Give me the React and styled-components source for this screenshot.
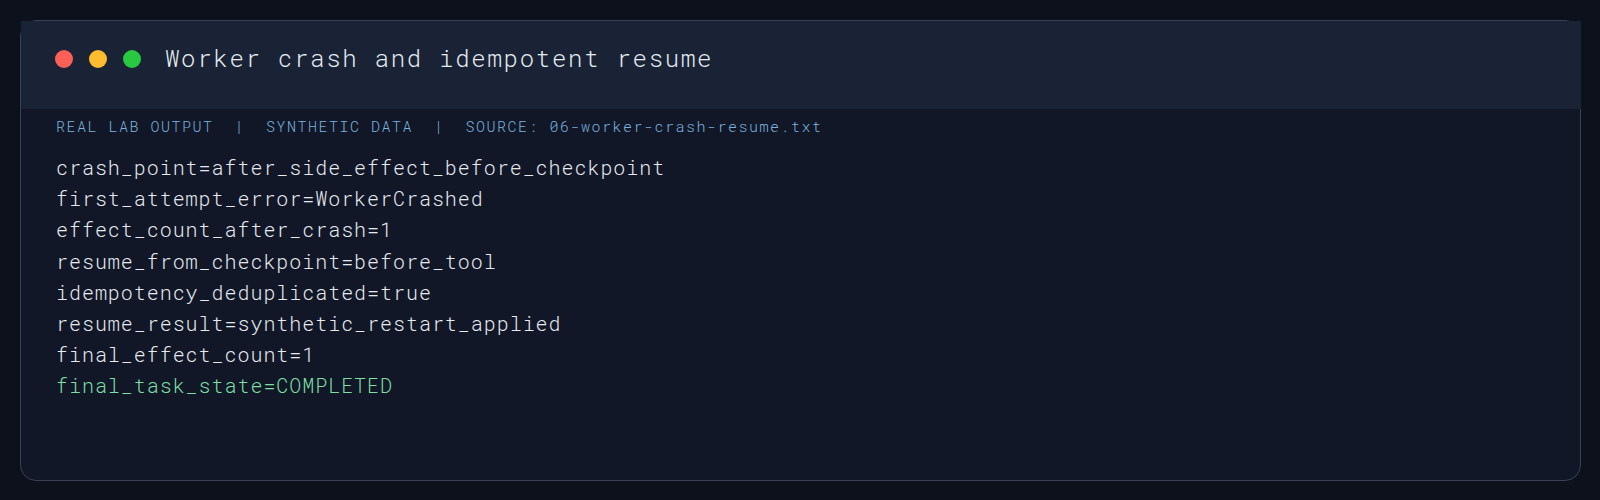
import React from 'react';
import styled, { createGlobalStyle } from 'styled-components';

const GlobalStyle = createGlobalStyle`
  html, body {
    margin: 0;
    padding: 0;
    background: #0c111b;
  }
  body {
    font-family: "Roboto Mono", "DejaVu Sans Mono", monospace;
  }
`;

const Page = styled.div`
  padding: 20px 19px 20px 20px;
  background: #0c111b;
  min-height: 500px;
  box-sizing: border-box;
`;

const Card = styled.div`
  height: 461px;
  box-sizing: border-box;
  border: 1px solid #364254;
  border-radius: 16px;
  background: #111727;
  display: flex;
  flex-direction: column;
`;

const Header = styled.div`
  display: flex;
  align-items: center;
  gap: 16px;
  height: 88px;
  box-sizing: border-box;
  padding: 22px 34px 35px;
  background: #1a2335;
  margin: 0 -1px 0 0;
`;

const Dots = styled.div`
  display: flex;
  gap: 16px;
  margin-right: 8px;
`;

const Dot = styled.span`
  width: 18px;
  height: 18px;
  border-radius: 50%;
  background: ${(props) => props.color};
`;

const Title = styled.h1`
  margin: 0;
  font-size: 24px;
  font-weight: 300;
  letter-spacing: 1.72px;
  line-height: 31px;
  color: #e4ebf3;
`;

const Body = styled.div`
  padding: 7px 34px 0 35px;
`;

const Meta = styled.div`
  font-size: 15px;
  font-weight: 300;
  letter-spacing: 1.5px;
  line-height: 20px;
  color: #7bb4df;
  white-space: pre;
  margin-bottom: 16px;
`;

const Line = styled.div`
  font-size: 20px;
  font-weight: 300;
  letter-spacing: 0.96px;
  line-height: 31.2px;
  color: ${(props) => (props.ok ? '#7cdfa4' : '#e6eaf0')};
  white-space: pre;
`;

const lines = [
  'crash_point=after_side_effect_before_checkpoint',
  'first_attempt_error=WorkerCrashed',
  'effect_count_after_crash=1',
  'resume_from_checkpoint=before_tool',
  'idempotency_deduplicated=true',
  'resume_result=synthetic_restart_applied',
  'final_effect_count=1',
];

export default function App() {
  return (
    <Page>
      <GlobalStyle />
      <Card>
        <Header>
          <Dots>
            <Dot color="#fe5f57" />
            <Dot color="#febc2e" />
            <Dot color="#28c840" />
          </Dots>
          <Title>Worker crash and idempotent resume</Title>
        </Header>
        <Body>
          <Meta>REAL LAB OUTPUT  |  SYNTHETIC DATA  |  SOURCE: 06-worker-crash-resume.txt</Meta>
          {lines.map((l) => (
            <Line key={l}>{l}</Line>
          ))}
          <Line ok>final_task_state=COMPLETED</Line>
        </Body>
      </Card>
    </Page>
  );
}
